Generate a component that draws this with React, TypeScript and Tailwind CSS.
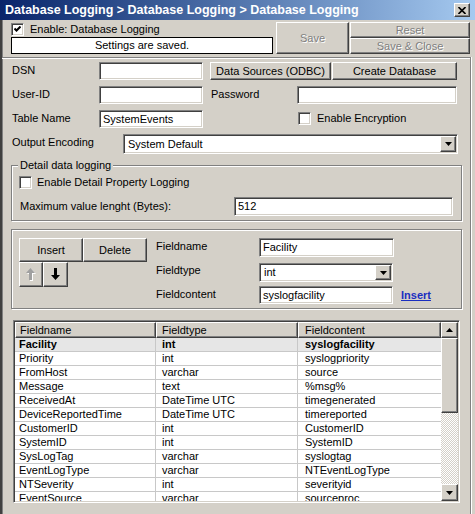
import React from 'react';

const raised =
  'bg-[#d4d0c8] border border-t-white border-l-white border-r-[#404040] border-b-[#404040] shadow-[inset_-1px_-1px_0_#808080,inset_1px_1px_0_#d4d0c8]';
const sunken =
  'bg-white border border-t-[#808080] border-l-[#808080] border-r-white border-b-white shadow-[inset_1px_1px_0_#404040,inset_-1px_-1px_0_#d4d0c8]';
const etched = 'border border-[#808080] shadow-[inset_1px_1px_0_white,1px_1px_0_white]';
const disabledText = 'text-[#808080] [text-shadow:1px_1px_0_white]';

function Check({ checked }: { checked?: boolean }) {
  return (
    <span className={`w-[13px] h-[13px] shrink-0 flex items-center justify-center ${sunken}`}>
      {checked && (
        <svg width="7" height="7" viewBox="0 0 7 7">
          <polyline points="0.5,2.5 2.5,4.5 6.5,0.5" fill="none" stroke="black" strokeWidth="2" />
        </svg>
      )}
    </span>
  );
}

function Tri({ down = true, color = 'black' }: { down?: boolean; color?: string }) {
  return (
    <svg width="7" height="4" viewBox="0 0 7 4">
      <path d={down ? 'M0 0 H7 L3.5 4 Z' : 'M0 4 H7 L3.5 0 Z'} fill={color} />
    </svg>
  );
}

function Select({ className, value }: { className: string; value: string }) {
  return (
    <div className={`${sunken} ${className} flex p-[1px]`}>
      <span className="flex-1 pl-[3px] flex items-center">{value}</span>
      <span className={`${raised} w-[16px] h-full flex items-center justify-center`}>
        <Tri />
      </span>
    </div>
  );
}

function Input({ className, value = '' }: { className: string; value?: string }) {
  return <div className={`${sunken} ${className} px-[3px] flex items-center`}>{value}</div>;
}

function BlockArrow({ up, disabled }: { up?: boolean; disabled?: boolean }) {
  const d = up
    ? 'M4.5 0 L9 5 L6 5 L6 12 L3 12 L3 5 L0 5 Z'
    : 'M4.5 12 L9 7 L6 7 L6 0 L3 0 L3 7 L0 7 Z';
  return (
    <svg width="10" height="13" viewBox="0 0 10 13">
      {disabled && <path d={d} fill="white" transform="translate(1 1)" />}
      <path d={d} fill={disabled ? '#a0a0a0' : 'black'} />
    </svg>
  );
}

const rows = [
  ['Facility', 'int', 'syslogfacility'],
  ['Priority', 'int', 'syslogpriority'],
  ['FromHost', 'varchar', 'source'],
  ['Message', 'text', '%msg%'],
  ['ReceivedAt', 'DateTime UTC', 'timegenerated'],
  ['DeviceReportedTime', 'DateTime UTC', 'timereported'],
  ['CustomerID', 'int', 'CustomerID'],
  ['SystemID', 'int', 'SystemID'],
  ['SysLogTag', 'varchar', 'syslogtag'],
  ['EventLogType', 'varchar', 'NTEventLogType'],
  ['NTSeverity', 'int', 'severityid'],
  ['EventSource', 'varchar', 'sourceproc'],
];

export default function App() {
  return (
    <div className="w-[475px] h-[514px] overflow-hidden bg-[#d4d0c8] flex flex-col font-['Liberation_Sans',Arial,sans-serif] text-[11px] leading-[13px] text-black">
      {/* title bar */}
      <div className="h-[20px] shrink-0 flex items-center bg-gradient-to-r from-[#0a246a] to-[#a6caf0] pl-[5px] pr-[5px]">
        <span className="flex-1 text-white font-bold text-[12.5px] whitespace-nowrap">
          Database Logging &gt; Database Logging &gt; Database Logging
        </span>
        <span className={`${raised} w-[16px] h-[14px] flex items-center justify-center`}>
          <svg width="8" height="7" viewBox="0 0 8 7">
            <path d="M0.5 0 L7.5 7 M7.5 0 L0.5 7" stroke="black" strokeWidth="1.6" />
          </svg>
        </span>
      </div>

      <div className="flex-1 flex flex-col border-l-2 border-l-[#404040] shadow-[inset_1px_0_0_#808080]">
        {/* top area */}
        <div className="h-[37px] shrink-0 flex pt-[2px] pb-[3px]">
          <div className="ml-[9px] w-[262px] flex flex-col">
            <div className="h-[15px] flex items-center">
              <Check checked />
              <span className="ml-[6px]">Enable: Database Logging</span>
            </div>
            <div className="h-[17px] border border-black bg-white flex items-center justify-center">
              Settings are saved.
            </div>
          </div>
          <div className={`${raised} ml-[3px] w-[73px] h-[32px] flex items-center justify-center ${disabledText}`}>
            Save
          </div>
          <div className="ml-[1px] w-[120px] flex flex-col">
            <div className={`${raised} h-[16px] flex items-center justify-center ${disabledText}`}>Reset</div>
            <div className={`${raised} h-[16px] flex items-center justify-center ${disabledText}`}>Save &amp; Close</div>
          </div>
        </div>

        {/* panel */}
        <div className="flex-1 w-[469px] flex flex-col border-t border-t-[#808080] border-r border-r-[#808080] shadow-[inset_0_1px_0_white,1px_0_0_white]">
          <div className="mt-[4px] h-[18px] flex items-start">
            <span className="ml-[10px] w-[87px] pt-[2px]">DSN</span>
            <Input className="w-[104px] h-[18px]" />
            <div className={`${raised} ml-[7px] w-[121px] h-[18px] flex items-center justify-center`}>Data Sources (ODBC)</div>
            <div className={`${raised} ml-[1px] w-[125px] h-[18px] flex items-center justify-center`}>Create Database</div>
          </div>
          <div className="mt-[6px] h-[18px] flex items-start">
            <span className="ml-[10px] w-[87px] pt-[2px]">User-ID</span>
            <Input className="w-[104px] h-[18px]" />
            <span className="ml-[8px] w-[86px] pt-[2px]">Password</span>
            <Input className="w-[160px] h-[18px]" />
          </div>
          <div className="mt-[6px] h-[18px] flex items-start">
            <span className="ml-[10px] w-[87px] pt-[2px]">Table Name</span>
            <Input className="w-[104px] h-[18px]" value="SystemEvents" />
            <span className="ml-[95px] mt-[2px]">
              <Check />
            </span>
            <span className="ml-[6px] pt-[2px]">Enable Encryption</span>
          </div>
          <div className="mt-[6px] h-[20px] flex items-start">
            <span className="ml-[10px] w-[111px] pt-[2px]">Output Encoding</span>
            <Select className="w-[335px] h-[20px]" value="System Default" />
          </div>

          {/* detail group */}
          <div className={`relative mt-[11px] ml-[9px] w-[451px] h-[56px] shrink-0 ${etched} pt-[10px] pl-[7px]`}>
            <span className="absolute top-[-7px] left-[6px] px-[2px] bg-[#d4d0c8]">Detail data logging</span>
            <div className="h-[13px] flex items-center">
              <Check />
              <span className="ml-[5px]">Enable Detail Property Logging</span>
            </div>
            <div className="mt-[8px] h-[19px] flex items-center">
              <span className="w-[215px] pl-[1px]">Maximum value lenght (Bytes):</span>
              <Input className="w-[219px] h-[19px]" value="512" />
            </div>
          </div>

          {/* field group */}
          <div className={`mt-[8px] ml-[9px] w-[451px] h-[80px] shrink-0 ${etched} pt-[8px] pl-[7px] flex`}>
            <div className="w-[128px] flex flex-col">
              <div className="flex">
                <div className={`${raised} w-[64px] h-[24px] flex items-center justify-center`}>Insert</div>
                <div className={`${raised} w-[64px] h-[24px] flex items-center justify-center`}>Delete</div>
              </div>
              <div className="flex">
                <div className={`${raised} w-[24px] h-[25px] flex items-center justify-center`}>
                  <BlockArrow up disabled />
                </div>
                <div className={`${raised} w-[25px] h-[25px] flex items-center justify-center`}>
                  <BlockArrow />
                </div>
              </div>
            </div>
            <div className="ml-[9px] flex flex-col">
              <div className="h-[19px] flex items-start">
                <span className="w-[103px] pt-[2px]">Fieldname</span>
                <Input className="w-[135px] h-[19px]" value="Facility" />
              </div>
              <div className="mt-[6px] h-[19px] flex items-start">
                <span className="w-[103px] pt-[1px]">Fieldtype</span>
                <Select className="w-[134px] h-[19px]" value="int" />
              </div>
              <div className="mt-[4px] h-[18px] flex items-start">
                <span className="w-[103px] pt-[2px]">Fieldcontent</span>
                <Input className="w-[134px] h-[18px]" value="syslogfacility" />
                <span className="ml-[8px] pt-[3px] font-bold text-[#1a2ec0] underline">Insert</span>
              </div>
            </div>
          </div>

          {/* list view */}
          <div className={`mt-[11px] ml-[11px] w-[447px] h-[183px] shrink-0 ${sunken} p-[1px] flex overflow-hidden`}>
            <div className="w-[426px] flex flex-col overflow-hidden">
              <div className="h-[16px] shrink-0 flex">
                <div className={`${raised} w-[141px] pl-[4px] flex items-center`}>Fieldname</div>
                <div className={`${raised} w-[142px] pl-[5px] flex items-center`}>Fieldtype</div>
                <div className={`${raised} w-[143px] pl-[6px] flex items-center`}>Fieldcontent</div>
              </div>
              {rows.map((r, i) => (
                <div
                  key={r[0]}
                  className={`h-[14px] shrink-0 flex border-b border-b-[#c8c8c8] ${i === 0 ? 'bg-[#e6e6e6] font-bold' : 'bg-white'}`}
                >
                  <span className="w-[141px] pl-[4px] border-r border-r-[#c8c8c8] whitespace-nowrap">{r[0]}</span>
                  <span className="w-[142px] pl-[6px] border-r border-r-[#c8c8c8] whitespace-nowrap">{r[1]}</span>
                  <span className="w-[143px] pl-[7px] whitespace-nowrap">{r[2]}</span>
                </div>
              ))}
            </div>
            <div className="w-[17px] flex flex-col">
              <div className={`${raised} h-[16px] shrink-0 flex items-center justify-center`}>
                <Tri down={false} />
              </div>
              <div className={`${raised} h-[75px] shrink-0`} />
              <div className="flex-1 bg-[repeating-conic-gradient(#d4d0c8_0_25%,#ffffff_0_50%)] bg-[length:2px_2px]" />
              <div className={`${raised} h-[17px] shrink-0 flex items-center justify-center`}>
                <Tri />
              </div>
            </div>
          </div>
        </div>
      </div>
    </div>
  );
}
